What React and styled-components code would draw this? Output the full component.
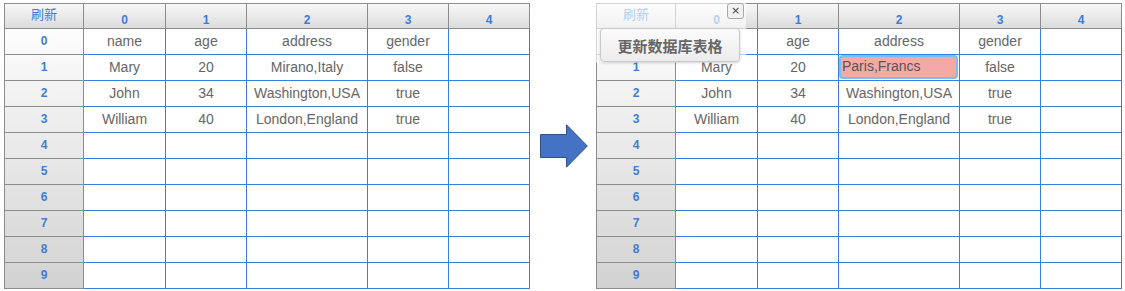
import React from "react";
import styled, { createGlobalStyle } from "styled-components";

const GlobalStyle = createGlobalStyle`
  html, body { margin: 0; padding: 0; background: #fff; }
  body { font-family: "Liberation Sans", Arial, sans-serif; }
`;

const BLUE = "#3b7dd8";
const GRAY = "#8c8c8c";
const COLS = [79, 82, 81, 121, 81, 81];

const Page = styled.div`
  display: flex;
  align-items: center;
  padding: 3px 0 0 4px;
  width: 1125px;
  box-sizing: border-box;
`;

const TableWrap = styled.div`
  position: relative;
  flex: none;
`;

const Grid = styled.div`
  display: grid;
  grid-template-columns: ${COLS.map((c) => c + "px").join(" ")};
  grid-template-rows: 25px repeat(10, 26px);
  border-top: 1px solid ${GRAY};
  border-left: 1px solid ${GRAY};
`;

const Corner = styled.div`
  box-sizing: border-box;
  border-right: 1px solid ${GRAY};
  border-bottom: 1px solid ${GRAY};
  background: linear-gradient(#f8f8f8, #dcdcdc);
  color: ${BLUE};
  font-family: "Noto Sans CJK SC", sans-serif;
  font-size: 13px;
  display: flex;
  justify-content: center;
  align-items: center;
  padding-bottom: 5px;
`;

const ColHead = styled.div`
  box-sizing: border-box;
  border-right: 1px solid ${GRAY};
  border-bottom: 1px solid ${GRAY};
  background: linear-gradient(#f8f8f8, #dcdcdc);
  color: ${BLUE};
  font-weight: bold;
  font-size: 12px;
  display: flex;
  justify-content: center;
  align-items: flex-end;
  padding-bottom: 1px;
`;

const RowHead = styled.div`
  box-sizing: border-box;
  border-right: 1px solid ${GRAY};
  border-bottom: 1px solid ${GRAY};
  background: linear-gradient(
    rgb(${(p) => Math.round(253 - 4.3 * p.$i)}, ${(p) => Math.round(253 - 4.3 * p.$i)}, ${(p) => Math.round(253 - 4.3 * p.$i)}),
    rgb(${(p) => Math.round(249 - 4.3 * p.$i)}, ${(p) => Math.round(249 - 4.3 * p.$i)}, ${(p) => Math.round(249 - 4.3 * p.$i)})
  );
  color: ${BLUE};
  font-weight: bold;
  font-size: 12px;
  display: flex;
  justify-content: center;
  align-items: center;
  padding-bottom: 2px;
`;

const Cell = styled.div`
  box-sizing: border-box;
  border-right: 1px solid ${BLUE};
  border-bottom: 1px solid ${BLUE};
  color: #666;
  font-size: 14px;
  display: flex;
  justify-content: center;
  align-items: center;
  padding-bottom: 2px;
  position: relative;
  white-space: nowrap;
`;

const EditBox = styled.div`
  position: absolute;
  left: 0;
  top: 0;
  right: 1px;
  bottom: 1px;
  box-sizing: border-box;
  border: 2px solid #79c0f2;
  border-radius: 4px;
  background: #f5a8a8;
  color: #555;
  font-size: 14px;
  display: flex;
  align-items: center;
  padding: 0 0 2px 1px;
`;

const Arrow = styled.svg`
  flex: none;
  margin: 0 8px 0 10px;
  display: block;
`;

const Veil = styled.div`
  position: absolute;
  left: 0;
  top: -1px;
  width: 150px;
  height: 61px;
  background: rgba(255, 255, 255, 0.62);
`;

const UpdateButton = styled.button`
  position: absolute;
  left: 4px;
  top: 25px;
  width: 140px;
  height: 34px;
  box-sizing: border-box;
  border: 1px solid #c9c9c9;
  border-radius: 4px;
  background: linear-gradient(#fbfbfb, #ececec);
  box-shadow: 0 1px 3px rgba(0, 0, 0, 0.18);
  color: #666;
  font-family: "Noto Sans CJK SC", sans-serif;
  font-weight: bold;
  font-size: 15px;
  padding: 0;
  cursor: pointer;
`;

const CloseButton = styled.button`
  position: absolute;
  left: 131px;
  top: 0px;
  width: 17px;
  height: 16px;
  box-sizing: border-box;
  border: 1px solid #a9a9a9;
  border-radius: 3px;
  background: #f3f3f3;
  color: #444;
  font-family: "DejaVu Sans", sans-serif;
  font-size: 11px;
  line-height: 12px;
  padding: 0;
  display: flex;
  align-items: center;
  justify-content: center;
`;

const DATA = [
  ["name", "age", "address", "gender", ""],
  ["Mary", "20", "Mirano,Italy", "false", ""],
  ["John", "34", "Washington,USA", "true", ""],
  ["William", "40", "London,England", "true", ""],
];

function Sheet({ edited }) {
  const rows = [];
  for (let r = 0; r < 10; r++) {
    rows.push(
      <RowHead key={"h" + r} $i={r}>
        {r}
      </RowHead>
    );
    for (let c = 0; c < 5; c++) {
      const v = DATA[r] ? DATA[r][c] : "";
      const isEdit = edited && r === 1 && c === 2;
      rows.push(
        <Cell key={r + "-" + c}>
          {isEdit ? <EditBox>Paris,Francs</EditBox> : v}
        </Cell>
      );
    }
  }
  return (
    <Grid>
      <Corner>刷新</Corner>
      {[0, 1, 2, 3, 4].map((c) => (
        <ColHead key={c}>{c}</ColHead>
      ))}
      {rows}
    </Grid>
  );
}

export default function App() {
  return (
    <>
      <GlobalStyle />
      <Page>
        <TableWrap>
          <Sheet />
        </TableWrap>
        <Arrow width="48" height="44" viewBox="0 0 48 44">
          <path
            d="M0.5 10.5 H26.5 V0.8 L47.3 22 L26.5 43.2 V33.5 H0.5 Z"
            fill="#4472c4"
            stroke="#2f528f"
            strokeWidth="1"
          />
        </Arrow>
        <TableWrap>
          <Sheet edited />
          <Veil />
          <CloseButton>×</CloseButton>
          <UpdateButton>更新数据库表格</UpdateButton>
        </TableWrap>
      </Page>
    </>
  );
}
